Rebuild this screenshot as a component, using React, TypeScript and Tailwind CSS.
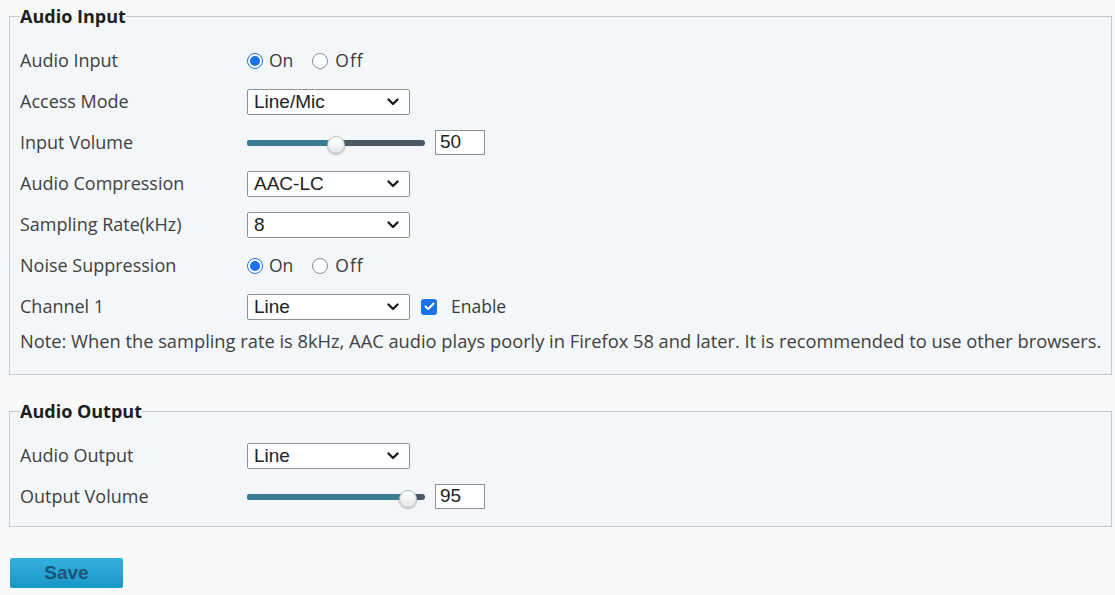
import React from "react";

const labelFont = { fontFamily: '"Open Sans", "Noto Sans", sans-serif' };
const ctrlFont = { fontFamily: '"Liberation Sans", Arial, sans-serif' };

function Select({ value, width = 163 }: { value: string; width?: number }) {
  return (
    <div
      className="flex h-[26px] items-center justify-between rounded-[2px] border border-[#8e9296] bg-white pl-[6px] pr-[10px] text-[19px] text-[#222]"
      style={{ ...ctrlFont, width }}
    >
      <span className="leading-none">{value}</span>
      <svg width="12" height="8" viewBox="0 0 12 8">
        <path d="M1.5 1.5 L6 6 L10.5 1.5" fill="none" stroke="#1f1f1f" strokeWidth="2.4" strokeLinecap="round" strokeLinejoin="round" />
      </svg>
    </div>
  );
}

function Radio({ checked }: { checked: boolean }) {
  return (
    <span
      className={
        "flex h-[16px] w-[16px] items-center justify-center rounded-full border " +
        (checked ? "border-[#1a73e8] bg-white" : "border-[#8c8c8c] bg-white")
      }
    >
      {checked && <span className="h-[10px] w-[10px] rounded-full bg-[#1a73e8]" />}
    </span>
  );
}

function OnOff() {
  return (
    <div className="flex items-center text-[17.5px] text-[#3a3a3a]" style={labelFont}>
      <Radio checked />
      <span className="ml-[6px]">On</span>
      <span className="ml-[19px]">
        <Radio checked={false} />
      </span>
      <span className="ml-[7px] tracking-[1px]">Off</span>
    </div>
  );
}

function Slider({ value }: { value: number }) {
  const trackW = 178;
  const thumb = 18;
  const left = (value / 100) * (trackW - thumb);
  return (
    <div className="flex items-center">
      <div className="relative h-[6px] rounded-full bg-[#4c5863]" style={{ width: trackW }}>
        <div className="h-full rounded-full bg-[#3b7c93]" style={{ width: left + thumb / 2 }} />
        <div
          className="absolute top-[-4px] h-[18px] w-[18px] rounded-full border border-[#b9bec3] bg-gradient-to-b from-white to-[#e6e8ea] shadow-[0_1px_2px_rgba(0,0,0,0.25)]"
          style={{ left }}
        />
      </div>
      <div
        className="ml-[10px] flex h-[25px] w-[50px] items-center border border-[#8e9296] bg-white pl-[4px] text-[19px] text-[#222]"
        style={ctrlFont}
      >
        {value}
      </div>
    </div>
  );
}

function Row({ label, children }: { label: string; children: React.ReactNode }) {
  return (
    <div className="flex h-[41px] items-center">
      <div className="w-[227px] text-[18px] text-[#404040]" style={labelFont}>
        {label}
      </div>
      {children}
    </div>
  );
}

function Group({ title, children, className }: { title: string; children: React.ReactNode; className?: string }) {
  return (
    <fieldset className={"ml-[9px] mr-[3px] border border-[#c5c9cd] bg-[#f4f7fa] px-[10px] " + (className || "")}>
      <legend className="text-[18px] font-bold leading-[23px] text-[#1e1e1e]" style={labelFont}>
        {title}
      </legend>
      {children}
    </fieldset>
  );
}

export default function App() {
  return (
    <div className="min-h-[595px] w-full bg-[#f9fafa] pt-[5px]">
      <Group title="Audio Input" className="pb-[19px]">
        <div className="pt-[12px]">
          <Row label="Audio Input">
            <OnOff />
          </Row>
          <Row label="Access Mode">
            <Select value="Line/Mic" />
          </Row>
          <Row label="Input Volume">
            <Slider value={50} />
          </Row>
          <Row label="Audio Compression">
            <Select value="AAC-LC" />
          </Row>
          <Row label="Sampling Rate(kHz)">
            <Select value="8" />
          </Row>
          <Row label="Noise Suppression">
            <OnOff />
          </Row>
          <Row label="Channel 1">
            <Select value="Line" />
            <span className="ml-[11px] flex h-[16px] w-[16px] items-center justify-center rounded-[3px] bg-[#1a73e8]">
              <svg width="11" height="9" viewBox="0 0 11 9">
                <path d="M1.5 4.5 L4.2 7 L9.5 1.5" fill="none" stroke="white" strokeWidth="2" strokeLinecap="round" strokeLinejoin="round" />
              </svg>
            </span>
            <span className="ml-[14px] text-[17.5px] text-[#3a3a3a]" style={labelFont}>
              Enable
            </span>
          </Row>
          <div className="flex h-[28px] items-center whitespace-nowrap text-[18.3px] text-[#404040]" style={labelFont}>
            Note: When the sampling rate is 8kHz, AAC audio plays poorly in Firefox 58 and later. It is recommended to use other browsers.
          </div>
        </div>
      </Group>

      <Group title="Audio Output" className="mt-[25px] pb-[9px]">
        <div className="pt-[12px]">
          <Row label="Audio Output">
            <Select value="Line" />
          </Row>
          <Row label="Output Volume">
            <Slider value={95} />
          </Row>
        </div>
      </Group>

      <button
        className="ml-[10px] mt-[31px] h-[30px] w-[113px] rounded-[2px] bg-gradient-to-b from-[#33b0dc] to-[#1896c6] text-[19px] font-bold text-[#1a5579]"
        style={ctrlFont}
      >
        Save
      </button>
    </div>
  );
}
